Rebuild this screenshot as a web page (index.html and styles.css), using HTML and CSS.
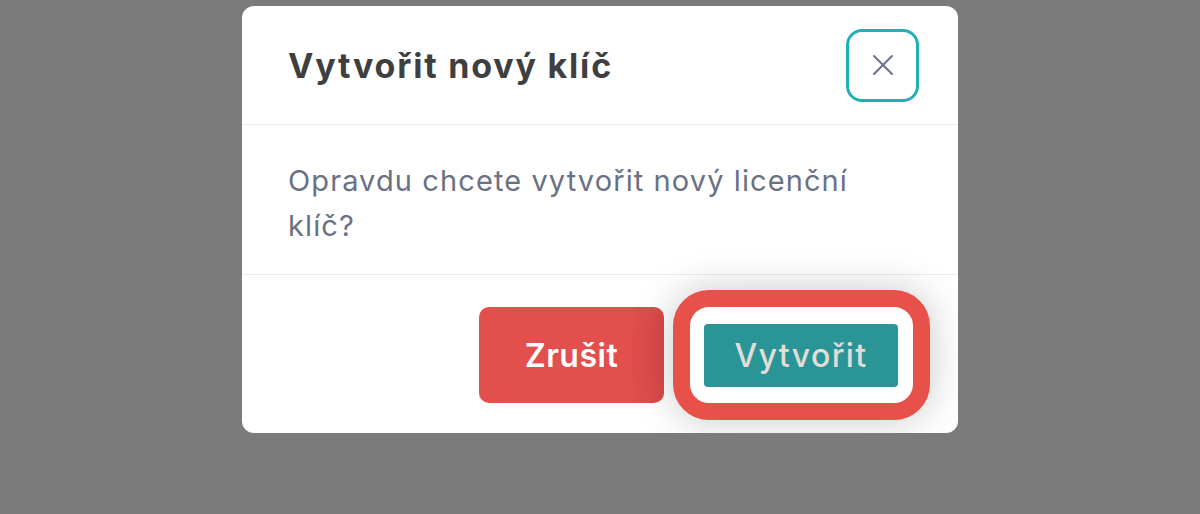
FILE: index.html
```html
<!DOCTYPE html>
<html lang="cs">
<head>
<meta charset="utf-8">
<title>Vytvořit nový klíč</title>
<link rel="stylesheet" href="styles.css">
</head>
<body>
<div class="page">
  <div class="modal">
    <div class="modal-header">
      <h2 class="modal-title">Vytvořit nový klíč</h2>
      <button class="close-btn" aria-label="Zavřít">
        <svg width="22" height="22" viewBox="0 0 22 22"><path d="M2 2L20 20M20 2L2 20" stroke="#6c7190" stroke-width="2" stroke-linecap="round" fill="none"/></svg>
      </button>
    </div>
    <div class="modal-body">
      <p class="modal-text">Opravdu chcete vytvořit nový licenční klíč?</p>
    </div>
    <div class="modal-footer">
      <button class="btn btn-cancel">Zrušit</button>
      <div class="focus-ring">
        <button class="btn btn-create">Vytvořit</button>
      </div>
    </div>
  </div>
</div>
</body>
</html>
```

FILE: styles.css
```css
html, body {
  margin: 0;
  padding: 0;
  height: 100%;
}
body {
  background: #7b7b7b;
  font-family: "Inter", "Noto Sans", sans-serif;
  overflow: hidden;
}
.page {
  display: flex;
  justify-content: center;
  padding-top: 6px;
}
.modal {
  width: 716px;
  height: 427px;
  background: #ffffff;
  border-radius: 12px;
  display: flex;
  flex-direction: column;
  overflow: hidden;
}
.modal-header {
  height: 118px;
  border-bottom: 1px solid #ececec;
  display: flex;
  align-items: center;
  justify-content: space-between;
  padding: 0 39px 0 46px;
}
.modal-title {
  margin: 0;
  font-size: 34px;
  font-weight: 650;
  color: #3f3f41;
  letter-spacing: 1.8px;
}
.close-btn {
  width: 73px;
  height: 73px;
  box-sizing: border-box;
  border: 3px solid #1fb1b6;
  border-radius: 16px;
  background: #ffffff;
  display: flex;
  align-items: center;
  justify-content: center;
  padding: 0;
}
.modal-body {
  height: 150px;
  border-bottom: 1px solid #ececec;
  box-sizing: border-box;
  padding: 33px 90px 0 46px;
}
.modal-text {
  margin: 0;
  font-size: 29px;
  line-height: 45px;
  color: #6a7184;
  letter-spacing: 1.1px;
}
.modal-footer {
  flex: 1;
  display: flex;
  align-items: center;
  justify-content: flex-end;
  gap: 9px;
  padding: 2px 28px 0 0;
}
.btn {
  font-family: "Inter", "Noto Sans", sans-serif;
  border: none;
  cursor: pointer;
  padding: 0;
}
.btn-cancel {
  width: 185px;
  height: 96px;
  border-radius: 10px;
  background: linear-gradient(90deg, #e24f4c 0%, #e24f4c 80%, #d94a48 100%);
  color: #ffffff;
  font-size: 32px;
  font-weight: 600;
  letter-spacing: 0.5px;
}
.focus-ring {
  display: flex;
  border: 17px solid #e8504a;
  border-radius: 36px;
  background: #ffffff;
  padding: 17px 15px 16px 14px;
  box-shadow: 0 0 40px rgba(0, 0, 0, 0.22);
}
.btn-create {
  width: 194px;
  height: 63px;
  border-radius: 4px;
  background: #2a9597;
  color: #e2ddd8;
  font-size: 32px;
  font-weight: 500;
  letter-spacing: 1.4px;
}
```
